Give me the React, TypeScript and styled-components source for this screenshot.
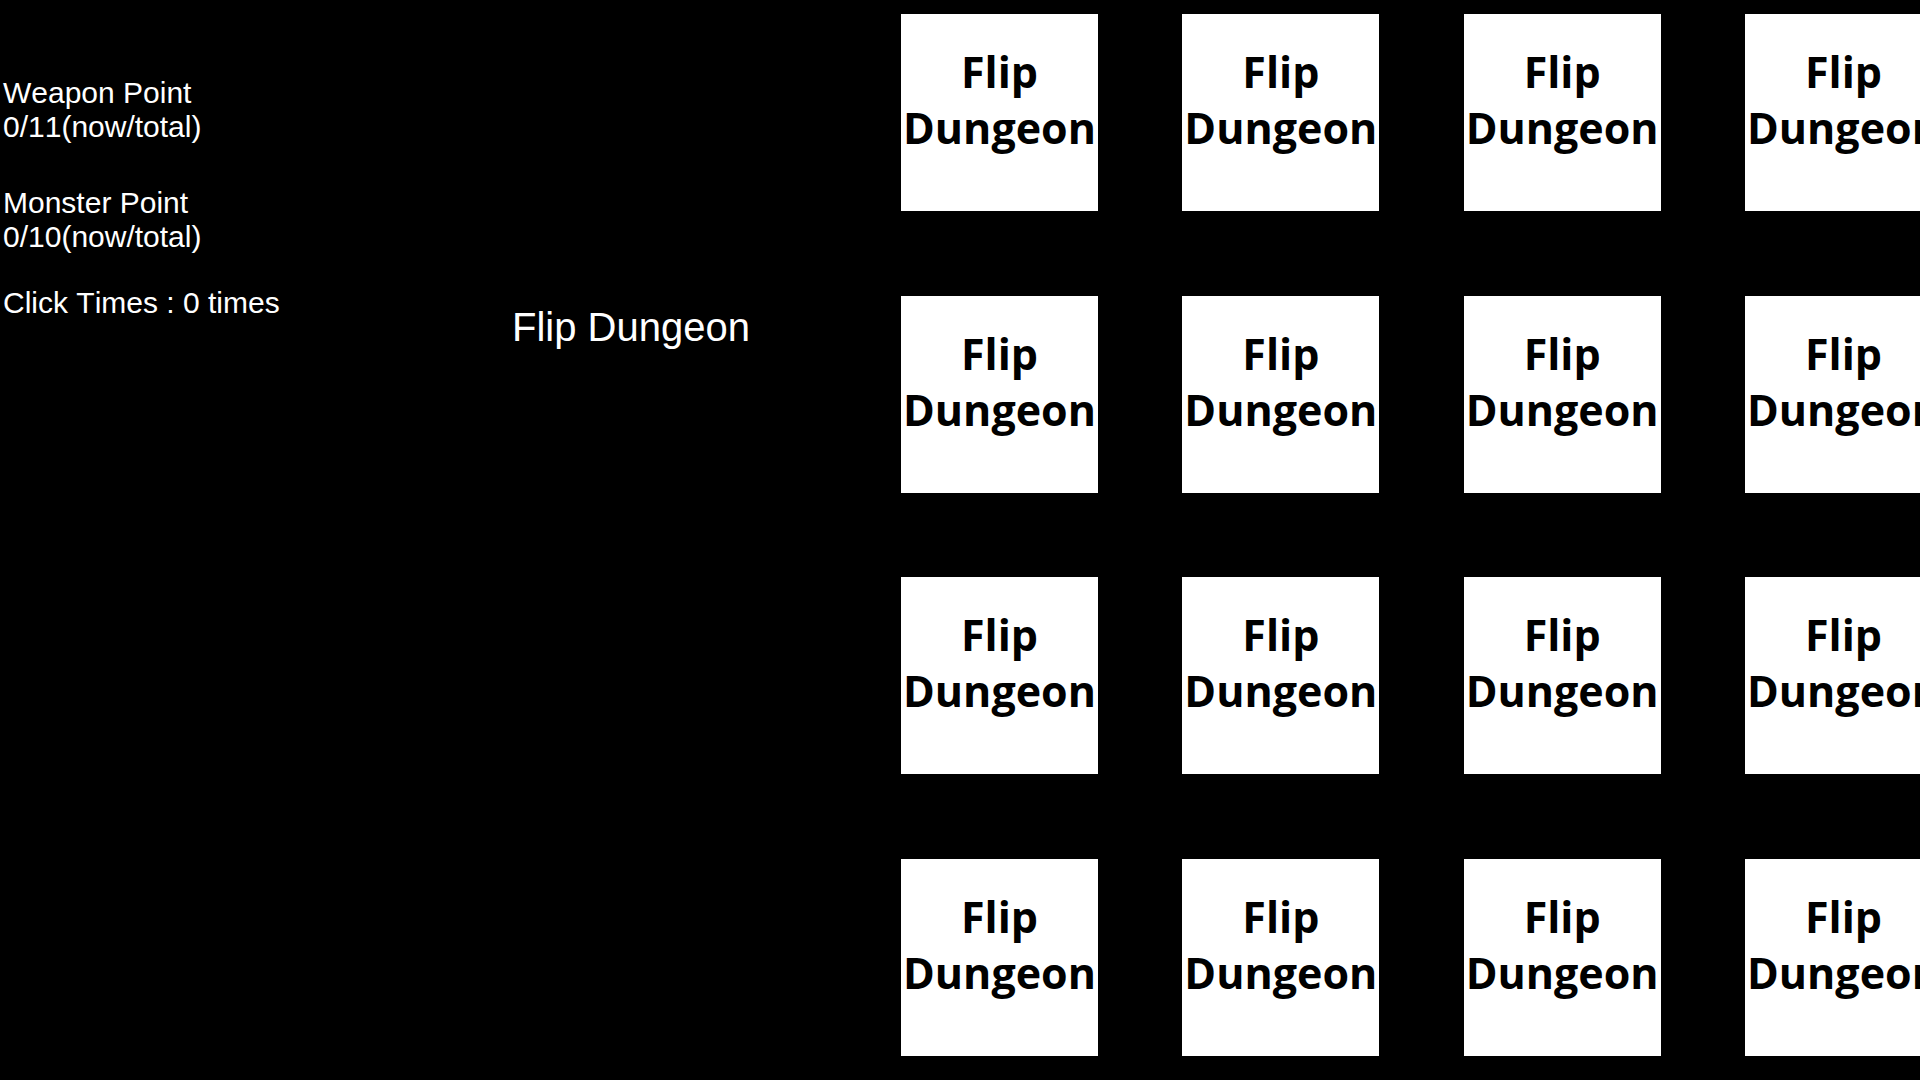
import React from "react";
import styled, { createGlobalStyle } from "styled-components";

const GlobalStyle = createGlobalStyle`
  *, *::before, *::after {
    box-sizing: border-box;
  }
  body {
    margin: 0;
    background: #000;
    color: #fff;
    font-family: "Liberation Sans", Arial, sans-serif;
    font-kerning: none;
    overflow: hidden;
  }
`;

const Game = styled.main`
  display: flex;
  align-items: flex-start;
  min-height: 100vh;
  overflow: hidden;
`;

const Scores = styled.section`
  flex: 0 0 512px;
  padding: 76px 0 0 3px;
  font-size: 30px;
  line-height: 34px;
`;

const Score = styled.p<{ $gap?: number }>`
  margin: 0 0 ${({ $gap = 0 }) => $gap}px;
`;

const Line = styled.span`
  display: block;
`;

const Title = styled.h1`
  flex: 0 0 389px;
  margin: 0;
  padding-top: 304px;
  font-size: 40px;
  font-weight: 400;
  line-height: 46px;
`;

const Board = styled.section`
  flex: none;
  display: grid;
  grid-template-columns: repeat(4, 197px);
  grid-auto-rows: 197px;
  place-content: space-between;
  width: 1041px;
  height: 1042px;
  margin: 14px 0;
`;

const Card = styled.button`
  display: flex;
  flex-direction: column;
  align-items: center;
  padding: 30px 0 0;
  border: 0;
  border-radius: 0;
  background: #fff;
  color: #000;
  font-family: "Open Sans", "Noto Sans", sans-serif;
  font-size: 43px;
  font-weight: 700;
  line-height: 56px;
  cursor: pointer;
`;

const cards = Array.from({ length: 16 }, (_, i) => i);

export default function App() {
  const [clicks, setClicks] = React.useState(0);

  return (
    <>
      <GlobalStyle />
      <Game>
        <Scores>
          <Score $gap={42}>
            <Line>Weapon Point</Line>
            <Line>0/11(now/total)</Line>
          </Score>
          <Score $gap={32}>
            <Line>Monster Point</Line>
            <Line>0/10(now/total)</Line>
          </Score>
          <Score>{`Click Times : ${clicks} times`}</Score>
        </Scores>
        <Title>Flip Dungeon</Title>
        <Board>
          {cards.map((id) => (
            <Card key={id} type="button" onClick={() => setClicks(clicks + 1)}>
              <Line>Flip</Line>
              <Line>Dungeon</Line>
            </Card>
          ))}
        </Board>
      </Game>
    </>
  );
}
